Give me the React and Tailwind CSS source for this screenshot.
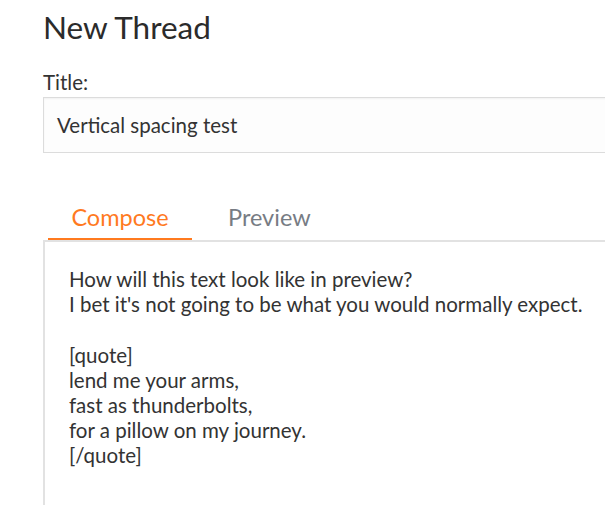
export default function App() {
  return (
    <div className="w-[605px] h-[505px] overflow-hidden bg-white text-[#333]" style={{ fontFamily: "Lato, 'Open Sans', sans-serif" }}>
      <div className="pl-[43px] w-[700px]">
        <h1 className="pt-[9px] text-[31.5px] leading-[36px] font-normal text-[#2b2b2b]">New Thread</h1>
        <div className="mt-[25px] text-[20.5px] leading-[24px]">Title:</div>
        <div className="mt-[3px] h-[56px] border border-[#dcdcdc] bg-[#fdfdfd] flex items-center pl-[13px] text-[20.5px] shadow-[inset_0_1px_2px_rgba(0,0,0,0.05)]">
          Vertical spacing test
        </div>
        <div className="mt-[50px] flex items-end">
          <div className="ml-[5px] w-[144px] text-center text-[23.5px] leading-[28px] pb-[7px] text-[#ff7a1f] border-b-2 border-[#ff7a1f]">Compose</div>
          <div className="ml-[36px] text-[23.5px] leading-[28px] pb-[9px] text-[#777c84]">Preview</div>
        </div>
        <div className="border-t-2 border-l-2 border-[#e2e2e2] h-[300px] pl-[24px] pt-[25px] text-[20.5px] leading-[25.2px] whitespace-pre text-[#333]">
{`How will this text look like in preview?
I bet it's not going to be what you would normally expect.

[quote]
lend me your arms,
fast as thunderbolts,
for a pillow on my journey.
[/quote]`}
        </div>
      </div>
    </div>
  );
}
